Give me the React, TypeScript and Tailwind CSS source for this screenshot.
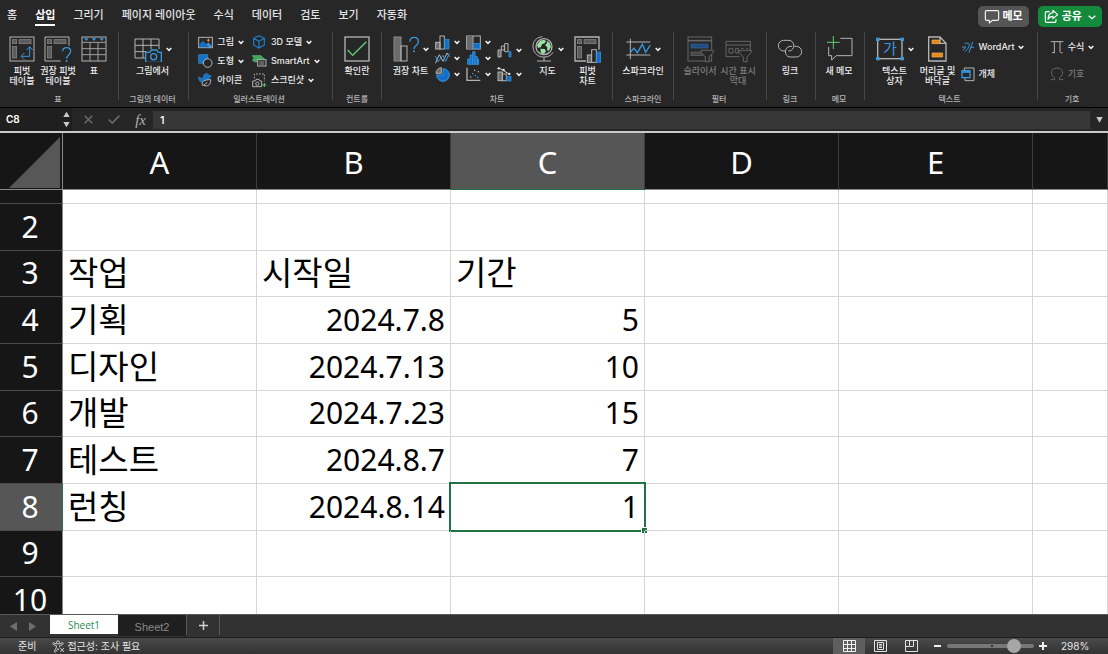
import type { ReactNode } from "react";

const GRAY = "#b4b4b4";
const BLUE = "#3a96dd";
const SOLID = "#1470c6";
const FILL = "#6b6b6b";
const GREEN = "#5fce78";
const DIM = "#666666";

const tabs = ["홈", "삽입", "그리기", "페이지 레이아웃", "수식", "데이터", "검토", "보기", "자동화"];
const columns = ["A", "B", "C", "D", "E", ""];

const rows = [
  { id: 2, cells: ["", "", ""] },
  { id: 3, cells: ["작업", "시작일", "기간"] },
  { id: 4, cells: ["기획", "2024.7.8", "5"] },
  { id: 5, cells: ["디자인", "2024.7.13", "10"] },
  { id: 6, cells: ["개발", "2024.7.23", "15"] },
  { id: 7, cells: ["테스트", "2024.8.7", "7"] },
  { id: 8, cells: ["런칭", "2024.8.14", "1"] },
  { id: 9, cells: ["", "", ""] },
  { id: 10, cells: ["", "", ""] },
];

// icons are drawn on a 3x grid
function Svg({ w, h, children }: { w: number; h: number; children: ReactNode }) {
  return (
    <svg
      width={w}
      height={h}
      viewBox={`0 0 ${w * 3} ${h * 3}`}
      fill="none"
      stroke={GRAY}
      strokeWidth={3}
      className="shrink-0"
      aria-hidden="true"
    >
      {children}
    </svg>
  );
}

function Chevron() {
  return (
    <svg width="6" height="6" viewBox="0 0 18 18" fill="none" stroke="#f0f0f0" strokeWidth="4.5" className="shrink-0" aria-hidden="true">
      <path d="M2 6l7 7 7-7" />
    </svg>
  );
}

function PivotBody() {
  return (
    <g stroke="#8c8c8c" strokeWidth="2" fill="#5c5c5c">
      <rect x="10" y="11" width="13" height="12" />
      <rect x="30" y="11" width="36" height="12" />
      <rect x="10" y="31" width="13" height="35" />
    </g>
  );
}

const PivotIcon = () => (
  <Svg w={26} h={26}>
    <rect x="3" y="3" width="72" height="72" />
    <PivotBody />
    <g stroke={BLUE}>
      <path d="M62 33v28H37" />
      <path d="M53 42l9-10 9 10M46 51l-10 10 10 10" />
    </g>
  </Svg>
);

const RecommendPivotIcon = () => (
  <Svg w={28} h={26}>
    <path d="M50 75H3V3h72v26" />
    <PivotBody />
    <path d="M56 46c0-15 24-15 24 0 0 11-12 11-12 22" stroke={BLUE} strokeWidth="4" />
    <circle cx="68" cy="75" r="3" fill={BLUE} stroke="none" />
  </Svg>
);

const TableIcon = () => (
  <Svg w={26} h={26}>
    <rect x="3" y="3" width="72" height="72" />
    <path d="M3 19h72M3 38h72M3 56h72M27 19v56M51 19v56" stroke="#a0a0a0" />
    <path d="M9 7h14l-7 8zM32 7h14l-7 8zM55 7h14l-7 8z" fill={BLUE} stroke="none" />
  </Svg>
);

const CameraTableIcon = () => (
  <Svg w={28} h={26}>
    <path d="M33 66H3V9h72v30M3 28h72M3 47h34M27 9v57M51 9v30" />
    <path d="M35 49h12l5-7h16l5 7h9v30H35z" stroke={BLUE} strokeWidth="4" />
    <circle cx="59" cy="62" r="9" stroke={BLUE} strokeWidth="4" />
  </Svg>
);

const PictureIcon = () => (
  <Svg w={15} h={13}>
    <rect x="2" y="4" width="41" height="31" />
    <path d="M4 25l11-11 18 20H4z" fill={SOLID} stroke="none" />
    <path d="M25 25l6-6 11 12v3h-9z" fill={BLUE} stroke="none" />
    <path d="M31 7l2 4 4 1-4 2-2 4-2-4-4-2 4-1z" fill="#f2a53a" stroke="none" />
  </Svg>
);

const ShapesIcon = () => (
  <Svg w={15} h={14}>
    <path d="M2 2h27v12a15 15 0 0 0-15 14H2z" fill={SOLID} stroke={BLUE} strokeWidth="2" />
    <circle cx="29" cy="27" r="13" />
  </Svg>
);

const BirdIcon = () => (
  <Svg w={15} h={14}>
    <path d="M2 12c5 4 11 5 16 3-3-7 1-13 7-13 5 0 7 3 8 6l7 1-6 5c0 6-4 9-8 10L10 28C5 26 2 20 2 12z" fill={SOLID} stroke={BLUE} strokeWidth="2" />
    <path d="M13 38c-3-14 6-18 25-18 1 15-8 22-22 17l12-9" fill="#272727" />
  </Svg>
);

const CubeIcon = () => (
  <Svg w={15} h={14}>
    <path d="M21 2l16 8v20l-16 9-16-9V10zM5 10l16 9 16-9M21 19v20" stroke="#1f7ed0" strokeWidth="3.5" />
  </Svg>
);

const SmartArtIcon = () => (
  <Svg w={15} h={14}>
    <path d="M1 5h26l11 11H12l4 7H7l-6-5 6-5z" fill="#3fa65a" stroke={GREEN} strokeWidth="2" />
    <rect x="17" y="17" width="25" height="19" fill="#272727" />
    <path d="M22 24h15M22 30h15" strokeWidth="2.5" />
  </Svg>
);

const ScreenshotIcon = () => (
  <Svg w={15} h={15}>
    <path d="M7 16V3h30v22" strokeDasharray="5 4" />
    <path d="M2 24h7l3-5h9l3 5h5v17H2z" fill="#272727" />
    <circle cx="16" cy="32" r="5" />
    <path d="M37 30v12M31 36h12" stroke={GREEN} />
  </Svg>
);

const CheckIcon = () => (
  <Svg w={26} h={26}>
    <rect x="3" y="3" width="72" height="72" strokeWidth="4" />
    <path d="M11 42l15 16 41-41" stroke={GREEN} strokeWidth="4" />
  </Svg>
);

const RecommendChartIcon = () => (
  <Svg w={26} h={26}>
    <rect x="3" y="3" width="21" height="72" fill={FILL} stroke="#8a8a8a" />
    <rect x="24" y="30" width="18" height="45" />
    <path d="M51 17c0-17 25-17 25 0 0 12-13 11-13 22" stroke={BLUE} strokeWidth="4" />
    <circle cx="63" cy="46" r="3" fill={BLUE} stroke="none" />
  </Svg>
);

const ColumnIcon = () => (
  <Svg w={15} h={15}>
    <rect x="2" y="22" width="13" height="20" fill={FILL} />
    <rect x="15" y="3" width="13" height="39" />
    <rect x="29" y="13" width="13" height="29" fill={SOLID} stroke={BLUE} strokeWidth="2" />
  </Svg>
);

const LineIcon = () => (
  <Svg w={15} h={13}>
    <path d="M1 34L13 8l11 20L36 3l7 11" />
    <path d="M1 12l8 17 15-19 8 18L43 4" stroke={BLUE} />
  </Svg>
);

const PieIcon = () => (
  <Svg w={15} h={15}>
    <path d="M24 5A19 19 0 1 1 5 24h19z" fill={SOLID} stroke={BLUE} />
    <path d="M19 2v17H3A17 17 0 0 1 19 2z" fill={FILL} />
  </Svg>
);

const TreemapIcon = () => (
  <Svg w={15} h={15}>
    <rect x="2" y="3" width="41" height="39" />
    <rect x="3" y="4" width="17" height="37" fill={FILL} stroke="none" />
    <path d="M21 3v39" />
    <rect x="22" y="25" width="20" height="16" fill={SOLID} stroke={BLUE} strokeWidth="2" />
  </Svg>
);

const HistogramIcon = () => (
  <Svg w={15} h={14}>
    <path d="M5 40V24h7V12h8V2h7v15h7v8h4v15zM12 40V24M20 40V12M27 40V17M34 40V25" fill={SOLID} stroke={BLUE} strokeWidth="2.5" />
  </Svg>
);

const ScatterIcon = () => (
  <Svg w={15} h={15}>
    <path d="M3 2v38h40" strokeWidth="4" />
    <g fill={BLUE} stroke="none">
      <rect x="18" y="18" width="4" height="4" />
      <rect x="26" y="24" width="4" height="4" />
      <rect x="33" y="29" width="4" height="4" />
    </g>
    <g fill={GRAY} stroke="none">
      <rect x="12" y="28" width="4" height="4" />
      <rect x="24" y="8" width="4" height="4" />
      <rect x="35" y="12" width="4" height="4" />
    </g>
  </Svg>
);

const WaterfallIcon = () => (
  <Svg w={15} h={15}>
    <path d="M3 42V21h9v21z" fill={FILL} />
    <path d="M13 21V9h9v12zM23 14V2h10v24H23V14" />
    <path d="M33 26h9v16h-6V26" fill={SOLID} stroke={BLUE} strokeWidth="2" />
  </Svg>
);

const ComboIcon = () => (
  <Svg w={15} h={15}>
    <rect x="3" y="15" width="13" height="26" fill={FILL} />
    <rect x="16" y="21" width="12" height="20" />
    <rect x="29" y="29" width="13" height="13" fill={SOLID} stroke={BLUE} strokeWidth="2" />
    <path d="M5 3l14 7 18 12" stroke="#e6e6e6" />
    <g fill="#e6e6e6" stroke="none">
      <circle cx="5" cy="4" r="3.5" />
      <circle cx="20" cy="9" r="3.5" />
      <circle cx="37" cy="21" r="3.5" />
    </g>
  </Svg>
);

const GlobeIcon = () => (
  <Svg w={22} h={26}>
    <circle cx="36" cy="32" r="24" strokeWidth="4" />
    <path d="M15 27l9-13 12-3 6 4-4 7-8 3-3 8-9 3zM44 15l9 5 4 14-7 10-5-1 1-9-7-6 6-6zM25 38l13 1 4 7-6 8-9-3z" fill="#9be0a4" stroke="none" />
    <path d="M31 2C12 4 2 17 3 33c1 20 18 32 36 30 12-1 19-6 24-14M36 64v11M15 75h42" />
  </Svg>
);

const PivotChartIcon = () => (
  <Svg w={28} h={27}>
    <path d="M36 75H3V3h72v38" strokeWidth="4" />
    <PivotBody />
    <rect x="40" y="57" width="13" height="22" fill={FILL} />
    <rect x="53" y="41" width="14" height="38" fill="#272727" />
    <rect x="68" y="48" width="12" height="31" fill={SOLID} stroke={BLUE} strokeWidth="2" />
  </Svg>
);

const SparkIcon = () => (
  <Svg w={25} h={26}>
    <path d="M1 18h72M1 57h72M13 8v62" />
    <path d="M14 48l10-12 10 14 15-25 10 24 14-22" stroke={BLUE} strokeWidth="4" />
  </Svg>
);

const Funnel = () => <path d="M42 43h37v6L66 63v14H55V63L42 49z" fill="#272727" stroke={DIM} />;

const SlicerIcon = () => (
  <Svg w={27} h={27}>
    <rect x="3" y="3" width="71" height="72" stroke={DIM} />
    <path d="M3 14h71" stroke={DIM} strokeWidth="5" />
    <rect x="12" y="24" width="51" height="12" fill="#234d7d" stroke="#31679f" strokeWidth="2" />
    <rect x="12" y="48" width="34" height="11" fill="#474747" stroke={DIM} strokeWidth="2" />
    <Funnel />
  </Svg>
);

const TimelineIcon = () => (
  <Svg w={27} h={27}>
    <path d="M44 62H3V16h73v26M3 27h73" stroke={DIM} />
    <path d="M12 37h12v14H12zM32 37h8v14h-8zM48 37h8M64 37h6" stroke={DIM} />
    <Funnel />
  </Svg>
);

const LinkIcon = () => (
  <Svg w={26} h={26}>
    <path d="M27 45h-7a16 16 0 0 1 0-32h16c20 2 18 30 1 32H34" />
    <path d="M52 31h6a16 16 0 0 1 0 32H39c-19-2-18-30 0-32h6" />
  </Svg>
);

const NewNoteIcon = () => (
  <Svg w={27} h={26}>
    <path d="M43 7h35v52H31L17 72V59H8V33" />
    <path d="M22 0v39M3 19h38" stroke={GREEN} />
  </Svg>
);

const TextBoxIcon = () => (
  <Svg w={28} h={26}>
    <rect x="5" y="10" width="73" height="58" strokeWidth="4" />
    <g fill={BLUE} stroke="none">
      <rect x="0" y="5" width="11" height="10" />
      <rect x="73" y="5" width="11" height="10" />
      <rect x="0" y="63" width="11" height="10" />
      <rect x="73" y="63" width="11" height="10" />
    </g>
    <text x="42" y="55" textAnchor="middle" fill={BLUE} stroke="none" fontSize="45" fontFamily="Noto Sans CJK KR">
      가
    </text>
  </Svg>
);

const HeaderFooterIcon = () => (
  <Svg w={19} h={26}>
    <path d="M2 3h34l18 19v53H2zM36 3v19h18" strokeWidth="4" />
    <path d="M12 12h23v11H12zM12 51h32v12H12z" fill="#e58a17" stroke="#f3b45f" strokeWidth="2" />
  </Svg>
);

const WordArtIcon = () => (
  <Svg w={14} h={14}>
    <path d="M3 21h11L6 31M11 11c9-3 15-2 14 3-1 9-7 15-13 21" stroke={BLUE} />
    <path d="M35 6L24 38M30 22h9" stroke={BLUE} />
  </Svg>
);

const ObjectIcon = () => (
  <Svg w={14} h={15}>
    <path d="M10 10V3h29v38H12v-7" />
    <rect x="3" y="11" width="24" height="21" fill="#272727" stroke={BLUE} strokeWidth="4" />
    <path d="M3 15h24" stroke={BLUE} strokeWidth="5" />
  </Svg>
);

const PiIcon = () => (
  <Svg w={14} h={14}>
    <path d="M2 5h38M13 5v33M30 5v30c0 3 3 4 8 3M6 38h9" />
  </Svg>
);

const OmegaIcon = () => (
  <Svg w={14} h={14}>
    <path d="M2 38h12v-5C-2 22 3 3 21 3s23 19 7 30v5h12" stroke={DIM} />
  </Svg>
);

function Group({ label, className, children }: { label: string; className: string; children: ReactNode }) {
  return (
    <section className={`flex flex-col justify-between pt-1 pb-[3px] ${className}`}>
      <div className="flex h-[54px] items-start justify-center">{children}</div>
      <h2 className="text-center text-[8px] leading-[10px] font-medium text-[#b5b5b5]">{label}</h2>
    </section>
  );
}

const Divider = () => <div className="h-[68px] w-px shrink-0 bg-[#484848]" />;

function Big({ icon, label, menu, dim, className = "w-9" }: { icon: ReactNode; label: string[]; menu?: boolean; dim?: boolean; className?: string }) {
  return (
    <button disabled={dim} className={`flex shrink-0 flex-col items-center ${className}`}>
      <span className="flex h-[26px] items-center gap-1">
        {icon}
        {menu && <Chevron />}
      </span>
      <span className={`mt-1 text-[9px] leading-[10px] font-medium whitespace-nowrap ${dim ? "text-[#7d7d7d]" : "text-[#ececec]"}`}>
        {label.map((line) => (
          <span key={line} className="block">
            {line}
          </span>
        ))}
      </span>
    </button>
  );
}

function Small({ icon, label, menu, dim }: { icon: ReactNode; label: string; menu?: boolean; dim?: boolean }) {
  return (
    <button disabled={dim} className="flex h-3 items-center gap-1 text-[9px] leading-3 font-medium whitespace-nowrap">
      {icon}
      <span className={dim ? "text-[#7d7d7d]" : "text-[#ececec]"}>{label}</span>
      {menu && <Chevron />}
    </button>
  );
}

function ChartButton({ icon, name }: { icon: ReactNode; name: string }) {
  return (
    <button aria-label={name} className="flex h-3 items-center gap-1">
      {icon}
      <Chevron />
    </button>
  );
}

function Ribbon() {
  return (
    <div className="flex h-[75px] overflow-hidden">
      <Group label="표" className="w-[118px] pr-[2px]">
        <Big icon={<PivotIcon />} label={["피벗", "테이블"]} />
        <Big icon={<RecommendPivotIcon />} label={["권장 피벗", "테이블"]} />
        <Big icon={<TableIcon />} label={["표"]} />
      </Group>
      <Divider />
      <Group label="그림의 데이터" className="w-[69px] pr-[2px]">
        <Big icon={<CameraTableIcon />} label={["그림에서"]} menu />
      </Group>
      <Divider />
      <Group label="일러스트레이션" className="w-[143px] pr-[3px]">
        <div className="flex gap-2">
          <div className="flex flex-col gap-[7px]">
            <Small icon={<PictureIcon />} label="그림" menu />
            <Small icon={<ShapesIcon />} label="도형" menu />
            <Small icon={<BirdIcon />} label="아이콘" />
          </div>
          <div className="flex flex-col gap-[7px]">
            <Small icon={<CubeIcon />} label="3D 모델" menu />
            <Small icon={<SmartArtIcon />} label="SmartArt" menu />
            <Small icon={<ScreenshotIcon />} label="스크린샷" menu />
          </div>
        </div>
      </Group>
      <Divider />
      <Group label="컨트롤" className="w-[48px]">
        <Big icon={<CheckIcon />} label={["확인란"]} />
      </Group>
      <Divider />
      <Group label="차트" className="w-[230px]">
        <div className="flex gap-[6px]">
          <Big icon={<RecommendChartIcon />} label={["권장 차트"]} menu />
          <div className="flex flex-col gap-1">
            <ChartButton icon={<ColumnIcon />} name="세로 막대형" />
            <ChartButton icon={<LineIcon />} name="꺾은선형" />
            <ChartButton icon={<PieIcon />} name="원형" />
          </div>
          <div className="flex flex-col gap-1">
            <ChartButton icon={<TreemapIcon />} name="계층 구조" />
            <ChartButton icon={<HistogramIcon />} name="통계" />
            <ChartButton icon={<ScatterIcon />} name="분산형" />
          </div>
          <div className="flex flex-col gap-3 pt-2">
            <ChartButton icon={<WaterfallIcon />} name="폭포" />
            <ChartButton icon={<ComboIcon />} name="혼합" />
          </div>
          <Big icon={<GlobeIcon />} label={["지도"]} menu className="w-10" />
          <Big icon={<PivotChartIcon />} label={["피벗", "차트"]} className="w-7" />
        </div>
      </Group>
      <Divider />
      <Group label="스파크라인" className="w-[60px]">
        <Big icon={<SparkIcon />} label={["스파크라인"]} menu />
      </Group>
      <Divider />
      <Group label="필터" className="w-[92px] pr-[2px]">
        <Big icon={<SlicerIcon />} label={["슬라이서"]} dim className="w-[38px]" />
        <Big icon={<TimelineIcon />} label={["시간 표시", "막대"]} dim className="w-[38px]" />
      </Group>
      <Divider />
      <Group label="링크" className="w-[48px] pr-[2px]">
        <Big icon={<LinkIcon />} label={["링크"]} />
      </Group>
      <Divider />
      <Group label="메모" className="w-[48px] pr-[2px]">
        <Big icon={<NewNoteIcon />} label={["새 메모"]} />
      </Group>
      <Divider />
      <Group label="텍스트" className="w-[172px] pr-[3px]">
        <div className="flex gap-[5px]">
          <Big icon={<TextBoxIcon />} label={["텍스트", "상자"]} menu className="w-10" />
          <Big icon={<HeaderFooterIcon />} label={["머리글 및", "바닥글"]} />
          <div className="flex flex-col gap-[15px] pt-[5px]">
            <Small icon={<WordArtIcon />} label="WordArt" menu />
            <Small icon={<ObjectIcon />} label="개체" />
          </div>
        </div>
      </Group>
      <Divider />
      <Group label="기호" className="grow pr-[2px]">
        <div className="flex flex-col gap-[15px] pt-[5px]">
          <Small icon={<PiIcon />} label="수식" menu />
          <Small icon={<OmegaIcon />} label="기호" dim />
        </div>
      </Group>
    </div>
  );
}

function TopBar() {
  return (
    <div className="flex h-8 items-start justify-between pr-[6px] pl-[7px]">
      <nav className="flex gap-[18px] pt-[7px] text-[11px] leading-[17px] font-medium whitespace-nowrap text-[#e4e4e4]">
        {tabs.map((tab) => (
          <a
            key={tab}
            href="#"
            className={tab === "삽입" ? "border-b-2 border-white font-bold text-white" : ""}
          >
            {tab}
          </a>
        ))}
      </nav>
      <div className="flex gap-[9px] pt-[6px] text-[11px] font-bold text-white">
        <button className="flex h-[21px] items-center gap-[3px] rounded-[5px] bg-[#555555] px-[6px]">
          <svg width="16" height="15" viewBox="0 0 48 45" fill="none" stroke="#f2f2f2" strokeWidth="3.5" aria-hidden="true">
            <path d="M8 5h32a4 4 0 0 1 4 4v21a4 4 0 0 1-4 4H25l-9 8v-8H8a4 4 0 0 1-4-4V9a4 4 0 0 1 4-4z" strokeLinejoin="round" />
          </svg>
          메모
        </button>
        <button className="flex h-[21px] items-center gap-[3px] rounded-[5px] bg-[#148a3c] px-[6px]">
          <svg width="15" height="15" viewBox="0 0 45 45" fill="none" stroke="#ffffff" strokeWidth="3.5" strokeLinejoin="round" aria-hidden="true">
            <path d="M17 8H8a4 4 0 0 0-4 4v24a4 4 0 0 0 4 4h24a4 4 0 0 0 4-4v-5" />
            <path d="M27 4l14 13-14 12v-7c-8 0-12 3-15 9 0-12 6-19 15-20z" />
          </svg>
          공유
          <svg width="8" height="8" viewBox="0 0 24 24" fill="none" stroke="#ffffff" strokeWidth="4" className="ml-[3px]" aria-hidden="true">
            <path d="M2 8l10 9 10-9" />
          </svg>
        </button>
      </div>
    </div>
  );
}

function FormulaBar() {
  return (
    <div className="flex h-6 items-center border-t border-black bg-[#262626]">
      <div className="flex h-full w-[72px] items-center bg-[#1f1f1f] pr-[2px] pl-[6px]">
        <input aria-label="이름 상자" defaultValue="C8" className="w-0 grow bg-transparent text-[10px] font-semibold text-white outline-none" />
        <svg width="7" height="17" viewBox="0 0 21 51" fill="#c8c8c8" aria-hidden="true">
          <path d="M1 18L10.500 2l9.500 16zM1 33h19L10.500 49z" />
        </svg>
      </div>
      <div className="flex w-[81px] items-center justify-between pr-[7px] pl-3 text-[#6a6a6a]">
        <button aria-label="취소">
          <svg width="9" height="9" viewBox="0 0 27 27" fill="none" stroke="currentColor" strokeWidth="4.500">
            <path d="M2 2l23 23M25 2L2 25" />
          </svg>
        </button>
        <button aria-label="입력">
          <svg width="12" height="9" viewBox="0 0 36 27" fill="none" stroke="currentColor" strokeWidth="5">
            <path d="M2 14l11 10L34 2" />
          </svg>
        </button>
        <button className="font-['Liberation_Serif'] text-[15px] leading-5 text-[#b0b0b0] italic">fx</button>
      </div>
      <input
        aria-label="수식 입력줄"
        defaultValue="1"
        className="h-[18px] w-0 grow bg-[#373737] px-[7px] text-[11px] font-medium text-white outline-none"
      />
      <button aria-label="수식 입력줄 확장" className="flex w-[18px] justify-center">
        <svg width="7" height="7" viewBox="0 0 21 21" fill="#c8c8c8">
          <path d="M1 3h19L10.500 20z" />
        </svg>
      </button>
    </div>
  );
}

function Sheet() {
  return (
    <main className="min-h-0 grow overflow-hidden border-t-2 border-[#c9c9c9] bg-white font-['Noto_Sans','Noto_Sans_CJK_KR',sans-serif]">
      <table className="h-[491px] w-full table-fixed border-separate border-spacing-0 leading-none text-black">
        <colgroup>
          <col className="w-[63px]" />
          <col className="w-[194px]" />
          <col className="w-[194px]" />
          <col className="w-[194px]" />
          <col className="w-[194px]" />
          <col className="w-[194px]" />
          <col />
        </colgroup>
        <thead>
          <tr className="h-[57px]">
            <th aria-label="모두 선택" className="border-r border-b border-[#8a8a8a] bg-[#161616] p-0">
              <svg width="52" height="51" viewBox="0 0 52 51" className="mt-[3px] ml-[9px]" aria-hidden="true">
                <path d="M51 0v51H0z" fill="#575757" />
              </svg>
            </th>
            {columns.map((name) => (
              <th
                key={name}
                className={`border-r border-b border-r-[#3c3c3c] px-0 pt-[2px] pb-0 text-[31px] font-normal text-white ${
                  name === "C" ? "border-b-[#217346] bg-[#565656]" : "border-b-[#8a8a8a] bg-[#161616]"
                }`}
              >
                {name}
              </th>
            ))}
          </tr>
        </thead>
        <tbody>
          <tr className="h-[14px]">
            <th className="border-r border-b border-r-[#8a8a8a] border-b-[#4a4a4a] bg-[#161616] p-0" />
            {columns.map((name) => (
              <td key={name} className="border-r border-b border-[#d6d6d6] p-0" />
            ))}
          </tr>
          {rows.map((row) => (
            <tr key={row.id}>
              <th
                className={`border-r border-b border-b-[#4a4a4a] py-0 pr-[2px] pl-0 text-[30px] font-normal text-white ${
                  row.id === 8 ? "border-r-[#217346] bg-[#565656]" : "border-r-[#8a8a8a] bg-[#161616]"
                }`}
              >
                {row.id}
              </th>
              {columns.map((name, i) => {
                const value = row.cells[i] ?? "";
                const isNumber = /^\d/.test(value);
                return (
                  <td
                    key={name}
                    className={`relative border-r border-b border-[#d6d6d6] px-[5px] py-0 ${
                      isNumber ? "text-right text-[30px]" : "text-left text-[33px] leading-[30px]"
                    }`}
                  >
                    {value}
                    {row.id === 8 && name === "C" && (
                      <span className="absolute -inset-[2px] border-2 border-[#217346]">
                        <span className="absolute -right-[4px] -bottom-[4px] size-[7px] border border-white bg-[#217346]" />
                      </span>
                    )}
                  </td>
                );
              })}
            </tr>
          ))}
        </tbody>
      </table>
    </main>
  );
}

function SheetTabs() {
  return (
    <div className="flex h-[23px] shrink-0 items-start border-t border-[#5a5a5a] bg-[#323232]">
      <div className="flex h-full w-[50px] items-center justify-center gap-3 pr-1">
        <button aria-label="이전 시트">
          <svg width="7" height="9" viewBox="0 0 7 9" fill="#6e6e6e">
            <path d="M7 0v9L0 4.500z" />
          </svg>
        </button>
        <button aria-label="다음 시트">
          <svg width="7" height="9" viewBox="0 0 7 9" fill="#6e6e6e">
            <path d="M0 0v9l7-4.500z" />
          </svg>
        </button>
      </div>
      <button className="h-[19px] w-[68px] bg-white pt-[2px] font-['Open_Sans'] text-[10px] font-medium text-[#2c8a4e]">Sheet1</button>
      <button className="h-[21px] w-[68px] bg-[#1f1f1f] pt-1 font-['Liberation_Sans'] text-[11px] text-[#8a8a8a]">Sheet2</button>
      <button aria-label="시트 추가" className="flex h-5 w-[34px] items-center justify-center border-x border-[#5a5a5a]">
        <svg width="9" height="9" viewBox="0 0 9 9" stroke="#d0d0d0" strokeWidth="1.500">
          <path d="M4.500 0v9M0 4.500h9" />
        </svg>
      </button>
    </div>
  );
}

function StatusBar() {
  return (
    <footer className="flex h-[17px] shrink-0 items-center border-t border-[#1c1c1c] bg-linear-to-b from-[#4a4a4a] to-[#333333] pl-[18px] text-[10px] leading-4 text-[#e6e6e6]">
      <span>준비</span>
      <button className="ml-[16px] flex items-center gap-[2px]">
        <svg width="13" height="13" viewBox="0 0 39 39" fill="none" stroke="#e6e6e6" strokeWidth="2.500" aria-hidden="true">
          <circle cx="18" cy="7" r="4.500" />
          <path d="M4 8c-3 2-2 5 1 6l8 3v6L7 34c0 3 3 4 5 1l6-9 3 4M32 8c3 2 2 5-1 6l-8 3v5" />
          <path d="M4 8l10 4M32 8l-10 4M25 24l11 12M36 24L25 36" />
        </svg>
        접근성: 조사 필요
      </button>
      <div className="ml-auto flex h-full items-center">
        <button aria-label="기본 보기" className="flex h-full w-8 items-center justify-center bg-[#5e5e5e]">
          <svg width="13" height="12" viewBox="0 0 13 12" fill="none" stroke="#f0f0f0">
            <path d="M.5.500h12v11H.5zM4.500 0v12M8.500 0v12M0 4.500h13M0 8.500h13" />
          </svg>
        </button>
        <button aria-label="페이지 레이아웃 보기" className="flex h-full w-[31px] items-center justify-center">
          <svg width="13" height="12" viewBox="0 0 13 12" fill="none" stroke="#e0e0e0">
            <path d="M.5.500h12v11H.5zM3.500 2.500h6v7h-6zM5 4.500h3M5 6h3M5 7.500h3" />
          </svg>
        </button>
        <button aria-label="페이지 나누기 미리 보기" className="flex h-full w-[31px] items-center justify-center">
          <svg width="13" height="12" viewBox="0 0 13 12" fill="none" stroke="#e0e0e0">
            <path d="M.5.500h12v11H.5zM4.500 0v6.500H8.500V0M1 6.500h3" />
          </svg>
        </button>
        <button aria-label="축소" className="flex w-5 justify-center">
          <svg width="7" height="2" viewBox="0 0 7 2">
            <path d="M0 0h7v2H0z" fill="#f0f0f0" />
          </svg>
        </button>
        <div className="relative flex w-[87px] items-center">
          <input
            type="range"
            aria-label="확대/축소"
            min={0}
            max={100}
            defaultValue={82}
            className="h-[4px] w-full appearance-none rounded-full bg-[#777777] [&::-webkit-slider-thumb]:size-[14px] [&::-webkit-slider-thumb]:appearance-none [&::-webkit-slider-thumb]:rounded-full [&::-webkit-slider-thumb]:bg-[#a6a6a6]"
          />
          <span className="absolute left-1/2 size-[2px] bg-[#333333]" />
        </div>
        <button aria-label="확대" className="flex w-[18px] justify-center">
          <svg width="8" height="8" viewBox="0 0 8 8">
            <path d="M3 0h2v3h3v2H5v3H3V5H0V3h3z" fill="#f0f0f0" />
          </svg>
        </button>
        <span className="w-14 pl-[9px]">298%</span>
      </div>
    </footer>
  );
}

export default function App() {
  return (
    <div className="flex h-screen flex-col overflow-hidden bg-[#272727] font-['Inter','Noto_Sans_CJK_KR',sans-serif]">
      <header className="shrink-0">
        <TopBar />
        <Ribbon />
        <FormulaBar />
      </header>
      <Sheet />
      <SheetTabs />
      <StatusBar />
    </div>
  );
}
